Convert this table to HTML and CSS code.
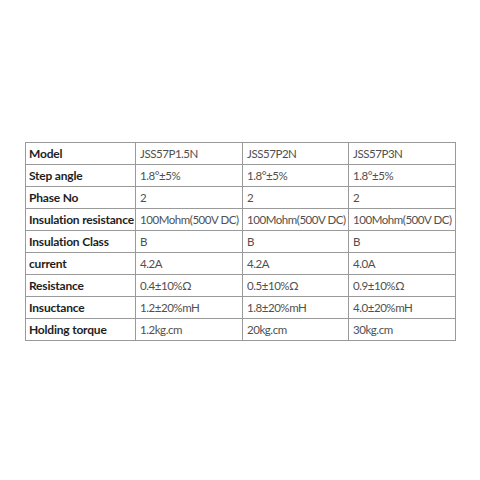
FILE: index.html
```html
<!DOCTYPE html>
<html>
<head>
<meta charset="utf-8">
<link rel="stylesheet" href="styles.css">
</head>
<body>
<div class="page">
<table class="spec">
<colgroup><col class="c1"><col class="c2"><col class="c3"><col class="c4"></colgroup>
<tr><th>Model</th><td>JSS57P1.5N</td><td>JSS57P2N</td><td>JSS57P3N</td></tr>
<tr><th>Step angle</th><td>1.8°±5%</td><td>1.8°±5%</td><td>1.8°±5%</td></tr>
<tr><th>Phase No</th><td>2</td><td>2</td><td>2</td></tr>
<tr><th>Insulation resistance</th><td>100Mohm(500V DC)</td><td>100Mohm(500V DC)</td><td>100Mohm(500V DC)</td></tr>
<tr><th>Insulation Class</th><td>B</td><td>B</td><td>B</td></tr>
<tr><th>current</th><td>4.2A</td><td>4.2A</td><td>4.0A</td></tr>
<tr><th>Resistance</th><td>0.4±10%Ω</td><td>0.5±10%Ω</td><td>0.9±10%Ω</td></tr>
<tr><th>Insuctance</th><td>1.2±20%mH</td><td>1.8±20%mH</td><td>4.0±20%mH</td></tr>
<tr><th>Holding torque</th><td>1.2kg.cm</td><td>20kg.cm</td><td>30kg.cm</td></tr>
</table>
</div>
</body>
</html>
```
FILE: styles.css
```css
html, body {
  margin: 0;
  padding: 0;
  background: #ffffff;
}
.page {
  width: 480px;
  height: 480px;
  padding: 142px 0 0 25px;
  box-sizing: border-box;
}
.spec {
  border-collapse: collapse;
  table-layout: fixed;
  width: 430px;
}
.c1 { width: 110px; }
.c2 { width: 107px; }
.c3 { width: 106px; }
.c4 { width: 107px; }
.spec th, .spec td {
  border: 1px solid #9a9a9a;
  height: 21px;
  padding: 0 0 0 3px;
  text-align: left;
  white-space: nowrap;
  line-height: 21px;
}
.spec th {
  font-family: Lato, "Open Sans", sans-serif;
  font-size: 12px;
  font-weight: 700;
  color: #1e1e1e;
  letter-spacing: -0.2px;
}
.spec td {
  font-family: Lato, "Noto Sans", sans-serif;
  font-size: 11.5px;
  font-weight: 400;
  color: #505050;
  padding-left: 4px;
  letter-spacing: -0.45px;
}
```
